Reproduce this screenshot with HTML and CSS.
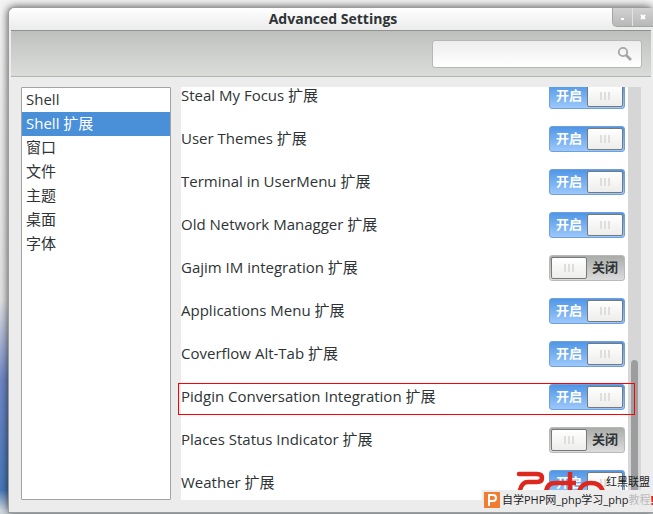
FILE: index.html
```
<!DOCTYPE html>
<html lang="zh-CN">
<head>
    <meta charset="UTF-8">
    <meta name="viewport" content="width=device-width, initial-scale=1.0">
    <title>Advanced Settings</title>
    <link rel="stylesheet" href="styles.css">
</head>
<body>
<main class="window">
    <header class="titlebar">
        <h1 class="title">Advanced Settings</h1>
        <div class="window-buttons">
            <button class="window-button" type="button" aria-label="Minimize">
                <svg width="5" height="12" viewBox="0 0 5 12"><path d="M1 7h3v2h-3z" fill="#fff"/></svg>
            </button>
            <button class="window-button" type="button" aria-label="Close">
                <svg width="6" height="6" viewBox="0 0 6 6"><path d="M1 1l4 4M5 1l-4 4" stroke="#fff" stroke-width="2"/></svg>
            </button>
        </div>
    </header>

    <div class="toolbar">
        <div class="search">
            <input class="search-input" type="text" aria-label="Search">
            <svg class="search-icon" width="16" height="16" viewBox="0 0 16 16" fill="none" stroke="#a3a6a3">
                <circle cx="6" cy="6" r="4.2" stroke-width="1.8"/>
                <path d="M9 9l5 5" stroke-width="2.6"/>
            </svg>
        </div>
    </div>

    <div class="content">
        <nav class="sidebar">
            <a class="nav-item" href="#">Shell</a>
            <a class="nav-item active" href="#">Shell 扩展</a>
            <a class="nav-item" href="#">窗口</a>
            <a class="nav-item" href="#">文件</a>
            <a class="nav-item" href="#">主题</a>
            <a class="nav-item" href="#">桌面</a>
            <a class="nav-item" href="#">字体</a>
        </nav>

        <section class="panel">
            <div class="list">
                <label class="row">
                    <span class="name">Steal My Focus 扩展</span>
                    <span class="switch"><input class="switch-input" type="checkbox" checked><span class="state">开启</span><span class="knob"></span></span>
                </label>
                <label class="row">
                    <span class="name">User Themes 扩展</span>
                    <span class="switch"><input class="switch-input" type="checkbox" checked><span class="state">开启</span><span class="knob"></span></span>
                </label>
                <label class="row">
                    <span class="name">Terminal in UserMenu 扩展</span>
                    <span class="switch"><input class="switch-input" type="checkbox" checked><span class="state">开启</span><span class="knob"></span></span>
                </label>
                <label class="row">
                    <span class="name">Old Network Managger 扩展</span>
                    <span class="switch"><input class="switch-input" type="checkbox" checked><span class="state">开启</span><span class="knob"></span></span>
                </label>
                <label class="row">
                    <span class="name">Gajim IM integration 扩展</span>
                    <span class="switch off"><input class="switch-input" type="checkbox"><span class="state">关闭</span><span class="knob"></span></span>
                </label>
                <label class="row">
                    <span class="name">Applications Menu 扩展</span>
                    <span class="switch"><input class="switch-input" type="checkbox" checked><span class="state">开启</span><span class="knob"></span></span>
                </label>
                <label class="row">
                    <span class="name">Coverflow Alt-Tab 扩展</span>
                    <span class="switch"><input class="switch-input" type="checkbox" checked><span class="state">开启</span><span class="knob"></span></span>
                </label>
                <label class="row marked">
                    <span class="name">Pidgin Conversation Integration 扩展</span>
                    <span class="switch"><input class="switch-input" type="checkbox" checked><span class="state">开启</span><span class="knob"></span></span>
                </label>
                <label class="row">
                    <span class="name">Places Status Indicator 扩展</span>
                    <span class="switch off"><input class="switch-input" type="checkbox"><span class="state">关闭</span><span class="knob"></span></span>
                </label>
                <label class="row">
                    <span class="name">Weather 扩展</span>
                    <span class="switch"><input class="switch-input" type="checkbox" checked><span class="state">开启</span><span class="knob"></span></span>
                </label>
            </div>
            <div class="scrollbar"><div class="thumb"></div></div>
        </section>
    </div>
</main>

<aside class="watermark">
    <div class="brand">
        <svg class="brand-logo" width="90" height="20" viewBox="0 0 90 20" fill="none" stroke="#dc281e" stroke-width="4.5">
            <path d="M3 4h18q5 0 5 4t-5 4h-9q-6 0-8 8" stroke-linecap="round"/>
            <path d="M30 22q1-9 9-9h21M54 2v20"/>
            <path d="M63 22q2-9 12-9t12 9"/>
        </svg>
        <span class="brand-name">红黑联盟</span>
    </div>
    <div class="site">
        <svg class="site-logo" width="16" height="16" viewBox="0 0 16 16">
            <path d="M0 0h16v16H0z" fill="#f07d32"/>
            <path d="M5 14V3h4q3 0 3 3t-3 3H5" fill="none" stroke="#fff" stroke-width="2"/>
        </svg>
        <span class="site-name">自学PHP网_php学习_php<span class="faded">教程</span></span>
        <span class="alert">!</span>
    </div>
</aside>
</body>
</html>
```
FILE: styles.css
```
* {
    box-sizing: border-box;
}

body {
    display: flex;
    height: 100vh;
    margin: 0;
    padding: 7px 0 1px 8px;
    overflow: hidden;
    background: linear-gradient(#f4f4f4 0, #e4e4e4 300px, #7088c8 380px, #4878b8 490px, #d0d8e0 510px);
    color: #2e3436;
    font-family: "Open Sans", "Noto Sans CJK SC", sans-serif;
    font-size: 15px;
}

.window {
    display: flex;
    flex-direction: column;
    flex: 1;
    min-width: 0;
    border: 1px solid #9a9d9a;
    border-right: 0;
    border-radius: 6px 6px 0 0;
    background: #ececec;
    box-shadow: 0 0 8px rgba(0, 0, 0, 0.7);
    padding: 0 2px;
}

.titlebar {
    position: relative;
    display: flex;
    justify-content: center;
    align-items: center;
    height: 22px;
    margin: 0 -2px;
    padding-left: 4px;
    border-radius: 6px 6px 0 0;
    background: linear-gradient(#fff, #ebebeb);
}

.title {
    margin: 0;
    font-size: 14px;
    font-weight: bold;
    line-height: 20px;
}

.window-buttons {
    position: absolute;
    top: 0;
    right: 0;
    display: flex;
    height: 19px;
    border: 1px solid #a4a6a4;
    border-width: 0 0 1px 1px;
    border-radius: 0 0 0 5px;
    background: linear-gradient(#d2d2d2, #b8b8b8);
}

.window-button {
    display: flex;
    justify-content: center;
    align-items: center;
    width: 20px;
    padding: 0;
    border: 0;
    border-right: 1px solid #e2e2e2;
    background: none;
}

.window-button:last-child {
    border-right: 0;
}

.toolbar {
    display: flex;
    justify-content: flex-end;
    align-items: center;
    height: 47px;
    padding: 0 9px;
    border-top: 1px solid #8f9491;
    border-bottom: 1px solid #b0b5b2;
    background: linear-gradient(#bcbfbc, #c8cac7 30%, #dadcd9);
}

.search {
    display: flex;
    align-items: center;
    width: 210px;
    height: 28px;
    padding: 0 8px;
    border: 1px solid #b4b9b5;
    border-radius: 3px;
    background: linear-gradient(#ededed, #fff);
}

.search-input {
    flex: 1;
    min-width: 0;
    border: 0;
    outline: 0;
    background: none;
    font: inherit;
}

.content {
    display: flex;
    flex: 1;
    gap: 10px;
    min-height: 0;
    padding: 10px 10px 12px;
}

.sidebar {
    width: 150px;
    border: 1px solid #a1a4a2;
    border-radius: 1px;
    background: #fff;
}

.nav-item {
    display: block;
    padding: 0 4px 2px;
    color: inherit;
    line-height: 22px;
    text-decoration: none;
}

.nav-item.active {
    background: #4a90d9;
    color: #fff;
}

.panel {
    display: flex;
    flex: 1;
    min-width: 0;
    overflow-y: clip;
}

/* the list is scrolled, so its first row is cut at the top */
.list {
    flex: 1;
    height: 430px;
    margin-top: -13px;
    background: #fff;
}

.row {
    position: relative;
    display: flex;
    justify-content: space-between;
    align-items: center;
    height: 43px;
    padding-right: 3px;
}

.name {
    padding-bottom: 2px;
}

.marked::after {
    content: "";
    position: absolute;
    top: 8px;
    left: -3px;
    right: -7px;
    height: 30px;
    border: 1px solid #f00;
    z-index: 1;
}

.switch {
    position: relative;
    display: flex;
    align-items: center;
    width: 76px;
    height: 26px;
    padding: 1px;
    border: 1px solid #6f9fdc;
    border-radius: 3px;
    background: linear-gradient(#5096e6, #9cc8fb);
    color: #fff;
    font-size: 13px;
    font-weight: bold;
}

.switch.off {
    flex-direction: row-reverse;
    border-color: #b8bab8;
    background: linear-gradient(#a9aca9, #dcdcdc);
    color: #2e3436;
}

.switch-input {
    position: absolute;
    inset: 0;
    margin: 0;
    opacity: 0;
}

.state {
    flex: 1;
    padding-bottom: 2px;
    text-align: center;
}

.knob {
    display: flex;
    justify-content: center;
    align-items: center;
    width: 36px;
    height: 22px;
    border: 1px solid #77797a;
    border-radius: 2px;
    background: linear-gradient(#fff, #ededeb);
}

.knob::before {
    content: "";
    width: 10px;
    height: 8px;
    background: repeating-linear-gradient(90deg, #dededc 0, #dededc 2px, transparent 2px, transparent 4px);
}

.scrollbar {
    width: 13px;
    padding: 273px 3px 0;
    background: #d6d6d6;
}

.thumb {
    height: 100%;
    border-radius: 4px;
    background: #9b9d9e;
}

.watermark {
    position: absolute;
    right: 0;
    bottom: 4px;
    width: 171px;
    color: #222;
    font-size: 11px;
    white-space: nowrap;
}

.brand {
    display: flex;
    align-items: flex-end;
    height: 20px;
    padding-left: 34px;
}

.brand-logo {
    flex: none;
}

.brand-name {
    line-height: 16px;
}

.site {
    display: flex;
    align-items: center;
    height: 20px;
    padding-left: 2px;
    background: #ececec;
}

.site-logo {
    flex: none;
}

.site-name {
    padding-left: 2px;
    line-height: 20px;
}

.faded {
    color: #bbb;
}

.alert {
    color: #e02020;
    font-size: 13px;
    font-weight: bold;
    line-height: 20px;
}
```
